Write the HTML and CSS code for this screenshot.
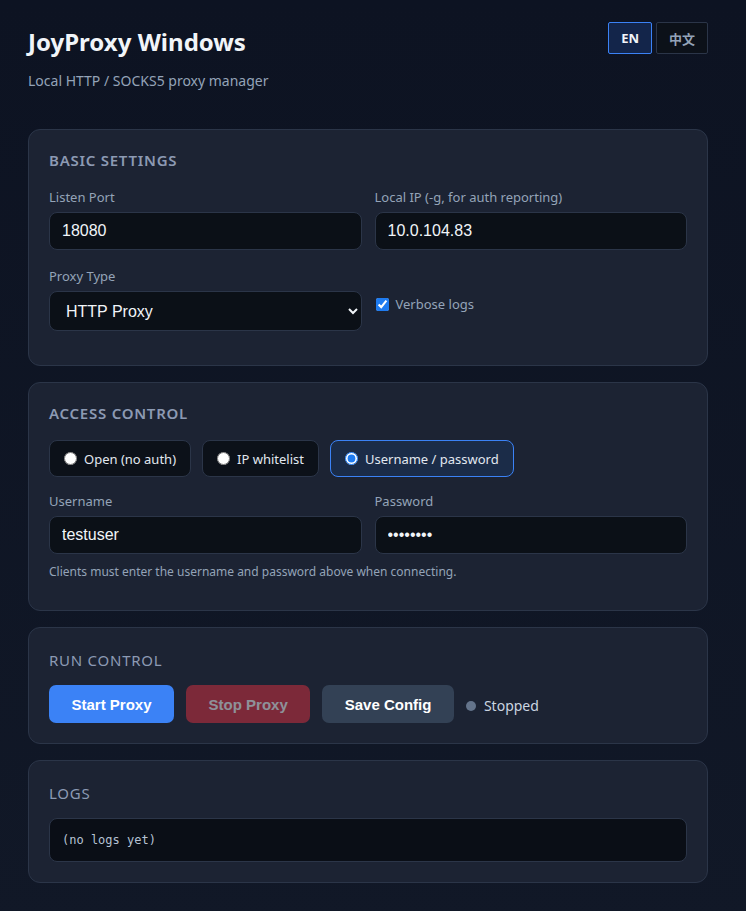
FILE: index.html
```html
<!DOCTYPE html>
<html lang="en">
<head>
<meta charset="UTF-8">
<title>JoyProxy Windows</title>
<link rel="stylesheet" href="styles.css">
</head>
<body>
<div class="page">
	<header class="top">
		<div>
			<h1>JoyProxy Windows</h1>
			<p class="sub">Local HTTP / SOCKS5 proxy manager</p>
		</div>
		<div class="lang">
			<button class="lang-btn active">EN</button>
			<button class="lang-btn">中文</button>
		</div>
	</header>

	<section class="card">
		<h2 class="card-title">Basic Settings</h2>
		<div class="grid">
			<div class="field">
				<label>Listen Port</label>
				<input type="text" class="inp" value="18080">
			</div>
			<div class="field">
				<label>Local IP (-g, for auth reporting)</label>
				<input type="text" class="inp" value="10.0.104.83">
			</div>
			<div class="field">
				<label>Proxy Type</label>
				<select class="inp sel">
					<option>HTTP Proxy</option>
					<option>SOCKS5 Proxy</option>
				</select>
			</div>
			<div class="field check-cell">
				<label class="check"><input type="checkbox" checked> Verbose logs</label>
			</div>
		</div>
	</section>

	<section class="card">
		<h2 class="card-title">Access Control</h2>
		<div class="modes">
			<label class="mode"><input type="radio" name="mode"> Open (no auth)</label>
			<label class="mode"><input type="radio" name="mode"> IP whitelist</label>
			<label class="mode on"><input type="radio" name="mode" checked> Username / password</label>
		</div>
		<div class="grid">
			<div class="field">
				<label>Username</label>
				<input type="text" class="inp" value="testuser">
			</div>
			<div class="field">
				<label>Password</label>
				<input type="password" class="inp" value="testpass">
			</div>
		</div>
		<p class="hint">Clients must enter the username and password above when connecting.</p>
	</section>

	<section class="card">
		<h2 class="card-title light">Run Control</h2>
		<div class="actions">
			<button class="btn start">Start Proxy</button>
			<button class="btn stop" disabled>Stop Proxy</button>
			<button class="btn save">Save Config</button>
			<span class="status"><i class="dot"></i>Stopped</span>
		</div>
	</section>

	<section class="card">
		<h2 class="card-title light">Logs</h2>
		<pre class="logs">(no logs yet)</pre>
	</section>
</div>
</body>
</html>
```

FILE: styles.css
```css
html,body{margin:0;min-height:100%;}
body{
	background:linear-gradient(180deg,#0d1322 0%,#111827 100%);
	color:#e2e8f0;
	font-family:"Noto Sans","Open Sans",sans-serif;
	min-height:911px;
}
.page{width:680px;padding:22px 28px 30px;}

.top{display:flex;justify-content:space-between;align-items:flex-start;margin-bottom:38px;}
h1{margin:4px 0 0;font-size:24px;line-height:31px;font-weight:700;color:#f1f5f9;}
.sub{margin:14px 0 0;font-size:14px;line-height:20px;color:#94a3b8;}
.lang{display:flex;gap:4px;}
.lang-btn{
	height:32px;
	padding:0 12px;
	border:1px solid #2b3548;
	border-radius:2px;
	background:#0c1119;
	color:#94a3b8;
	font-family:"Noto Sans","Noto Sans CJK SC",sans-serif;
	font-size:13px;
	font-weight:700;
}
.lang-btn.active{border-color:#3b82f6;background:#13254a;color:#f1f5f9;}

.card{
	background:#1c2333;
	border:1px solid #2b3548;
	border-radius:12px;
	padding:20px;
	margin-bottom:16px;
}
.card-title{
	margin:0 0 17px;
	font-size:15px;
	line-height:20px;
	font-weight:600;
	letter-spacing:0.05em;
	text-transform:uppercase;
	color:#8c9ab3;
}
.card-title.light{font-weight:400;margin:2px 0 15px;}

.grid{display:grid;grid-template-columns:1fr 1fr;column-gap:13px;row-gap:16px;margin-bottom:14px;}
.field{display:flex;flex-direction:column;}
.field label{font-size:13px;line-height:20px;color:#94a3b8;margin-bottom:5px;}
.inp{
	height:38px;
	box-sizing:border-box;
	background:#0b1017;
	border:1px solid #2b3548;
	border-radius:8px;
	padding:0 12px;
	color:#f1f5f9;
	font-family:"Liberation Sans",Arial,sans-serif;
	font-size:16px;
}
.sel{height:40px;padding:0 12px;color-scheme:dark;}
.check-cell{justify-content:flex-end;padding-bottom:17px;}
.field label.check{display:flex;align-items:center;gap:7px;margin:0;font-size:13px;}
.check input{margin:0 0 0 1px;width:13px;height:13px;accent-color:#1e7bf0;}

.modes{display:flex;gap:11px;margin-bottom:14px;}
.mode{
	display:flex;
	align-items:center;
	gap:7px;
	height:37px;
	box-sizing:border-box;
	padding:0 14px;
	background:#0c1119;
	border:1px solid #2b3548;
	border-radius:8px;
	font-size:13px;
	color:#e2e8f0;
}
.mode input{margin:0;width:13px;height:13px;accent-color:#1e7bf0;}
.mode.on{border-color:#3b82f6;background:#1b2c48;}

.hint{margin:-4px 0 10px;font-size:12px;line-height:16px;color:#94a3b8;}

.actions{display:flex;align-items:center;gap:12px;}
.btn{
	height:38px;
	padding:0 22.5px;
	border:0;
	border-radius:7px;
	font-family:"Liberation Sans",Arial,sans-serif;
	font-size:15px;
	font-weight:700;
	color:#fff;
}
.start{background:#3b82f6;}
.stop{background:#dc2f3f;opacity:0.5;}
.save{background:#334155;}
.status{display:flex;align-items:center;gap:8px;font-size:14px;color:#cbd5e1;padding-top:3px;}
.dot{display:inline-block;width:10px;height:10px;border-radius:50%;background:#64748b;}

.logs{
	margin:0;
	height:44px;
	box-sizing:border-box;
	padding:13px 12px;
	background:#0a0e16;
	border:1px solid #2b3548;
	border-radius:8px;
	font-family:"DejaVu Sans Mono","Liberation Mono",monospace;
	font-size:12px;
	line-height:16px;
	color:#b6c2d4;
}
```
